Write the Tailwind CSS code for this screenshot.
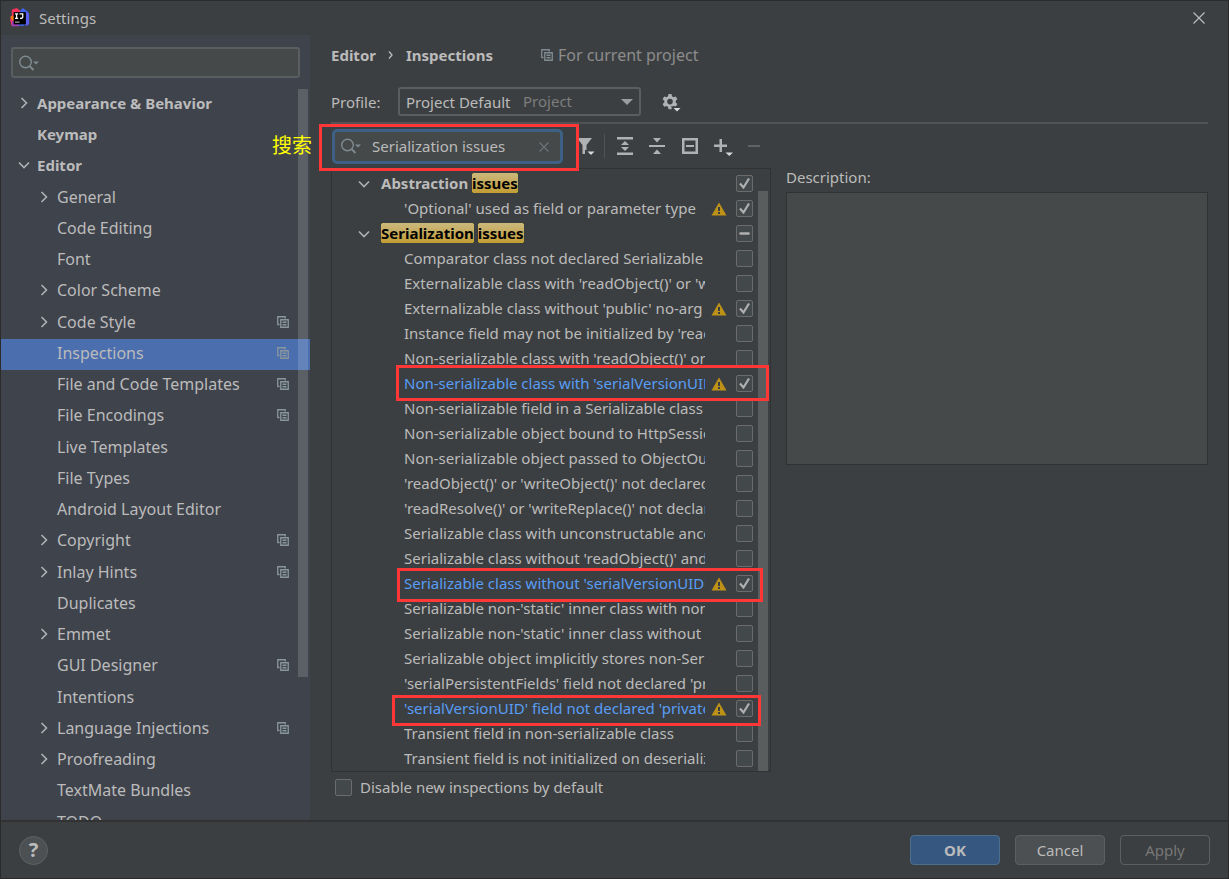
<!DOCTYPE html>
<html lang="en">
<head>
  <meta charset="UTF-8">
  <meta name="viewport" content="width=device-width, initial-scale=1.0">
  <title>Settings</title>
  <script src="https://cdn.jsdelivr.net/npm/@tailwindcss/browser@4"></script>
</head>
<body class="relative flex h-screen flex-col overflow-hidden border border-[#2b2b2b] bg-[#3c3f41] font-['Noto_Sans','Noto_Sans_CJK_SC',sans-serif] text-[15px] leading-5 text-[#bbbbbb]">

  <!-- Shared icons -->
  <svg class="hidden">
    <symbol id="i-right" viewBox="0 0 12 12"><path d="M3.500 1 8.500 6l-5 5" fill="none" stroke="#afb1b3" stroke-width="1.600"/></symbol>
    <symbol id="i-down" viewBox="0 0 12 12"><path d="M1 3.500 6 8.500l5-5" fill="none" stroke="#afb1b3" stroke-width="1.600"/></symbol>
    <symbol id="i-copy" viewBox="0 0 12 12"><path d="M2.500 8.500H.75V.75h7.500V2.500M3.750 3.750h7.500v7.500h-7.500zM5.500 6.250h4M5.500 8.750h4" fill="none" stroke="currentColor" stroke-width="1.300"/></symbol>
    <symbol id="i-search" viewBox="0 0 20 16"><circle cx="6.500" cy="7" r="5.800" fill="none" stroke="#7f8b91" stroke-width="1.400"/><path d="m10.500 11 4 4" stroke="#7f8b91" stroke-width="1.800"/><path d="M14 6.500h6l-3 3z" fill="#7f8b91"/></symbol>
    <symbol id="i-warn" viewBox="0 0 16 14"><path d="M8 .5 15.500 13.500H.5z" fill="#be9117"/><path d="M7 5h2v4H7zM7 10h2v2H7z" fill="#3c3f41"/></symbol>
    <symbol id="i-tick" viewBox="0 0 17 17"><path d="m4 8.500 3.500 4 5.500-9" fill="none" stroke="#b0b0b0" stroke-width="2.200"/></symbol>
    <symbol id="i-dash" viewBox="0 0 17 17"><path d="M4.500 8.500h8" stroke="#b0b0b0" stroke-width="2.500" stroke-linecap="round"/></symbol>
  </svg>

  <header class="flex h-[34px] shrink-0 items-center pr-[23px] pl-[9px]">
    <svg class="mr-[9px] size-5" viewBox="0 0 22 22">
      <path d="M2 2 7 0l6 4v7L2 20 0 13l2-4z" fill="#fe315d"/>
      <path d="M0 10 3 8l5 4-3 5z" fill="#f97a12"/>
      <path d="M2 14h12l-4 6H2z" fill="#a03fb8"/>
      <path d="m11 3 3-3 6 4v12l-6 4-5-1z" fill="#3f63ea"/>
      <path d="m17 3 4 3v12l-4 2z" fill="#5a5ff0"/>
      <path d="M4 4.500h13.500V18H4z" fill="#000"/>
      <path d="M5.500 6.500h3.500M7.250 6.500v5M5.500 11.500h3.500M10.500 6.500H14v3.500q0 1.500-3 1.500" fill="none" stroke="#fff" stroke-width="1.400"/>
      <path d="M5.500 15.500h5" stroke="#bbb" stroke-width="1.200"/>
    </svg>
    <h1 class="flex-1">Settings</h1>
    <button type="button" aria-label="Close">
      <svg class="size-3" viewBox="0 0 12 12"><path d="m.5.5 11 11m0-11-11 11" stroke="#bbbbbb" stroke-width="1.200"/></svg>
    </button>
  </header>

  <div class="flex min-h-0 flex-1">
    <!-- Settings categories -->
    <aside class="relative flex w-[309px] shrink-0 flex-col bg-[#3f434c] pt-3">
      <div class="relative mr-2.5 mb-[11px] ml-2.5">
        <svg class="absolute top-2 left-2 h-4 w-5"><use href="#i-search"/></svg>
        <input type="text" aria-label="Search settings" class="block h-[31px] w-full rounded-[3px] border-2 border-[#5a5e60] bg-[#45494a] pl-8 outline-none">
      </div>
      <nav class="min-h-0 flex-1 overflow-hidden" id="categories"></nav>
      <div class="absolute top-[54px] right-0.5 h-[588px] w-2.5 bg-white/15"></div>
    </aside>

    <main class="flex min-w-0 flex-1 flex-col pr-5 pl-[21px]">
      <div class="mt-2.5 flex h-5 items-center">
        <b>Editor</b>
        <svg class="mx-3 h-2 w-[6px]" viewBox="0 0 6 8"><path d="m1 .5 3 3.500-3 3.500" fill="none" stroke="#bbbbbb" stroke-width="1.300"/></svg>
        <b>Inspections</b>
        <svg class="mr-[5px] ml-12 size-3 text-[#7f8b91]"><use href="#i-copy"/></svg>
        <span class="text-base leading-5 text-[#8c8c8c]">For current project</span>
      </div>

      <div class="mt-[22px] flex h-[29px] items-center">
        <label for="profile" class="w-[67px]">Profile:</label>
        <div class="relative">
          <select id="profile" class="block h-[29px] w-[243px] appearance-none rounded-[3px] border-2 border-[#5a5e60] bg-[#3c3f41] pl-1.5 outline-none">
            <option>Project Default</option>
            <option>Default</option>
          </select>
          <span class="pointer-events-none absolute top-1 left-[125px] text-[#7d7d7d]">Project</span>
          <svg class="pointer-events-none absolute top-3 right-2 h-[6px] w-3" viewBox="0 0 12 6"><path d="M0 0h12L6 6z" fill="#9a9da0"/></svg>
        </div>
        <button type="button" aria-label="Profile actions" class="ml-5">
          <svg class="size-5" viewBox="0 0 20 20">
            <path d="M7.500 2h3l.5 2.300 1.500.9 2.300-.7 1.600 2.700-1.700 1.600v1.600l1.700 1.600-1.600 2.700-2.300-.7-1.500.9-.5 2.300h-3L7 14.900 5.500 14l-2.300.7L1.600 12l1.700-1.600V8.800L1.600 7.200l1.600-2.700 2.300.7L7 4.300zM9 6.800a2.800 2.800 0 1 0 0 5.600 2.800 2.800 0 0 0 0-5.600" fill="#afb1b3" fill-rule="evenodd"/>
            <path d="M12 15.500h8l-4 4z" fill="#3c3f41" stroke="#3c3f41" stroke-width="2"/>
            <path d="M12.500 16h7L16 19.500z" fill="#d8d8d8"/>
          </svg>
        </button>
      </div>
      <hr class="mt-1.5 border-t-2 border-[#515355]">

      <div class="flex min-h-0 gap-[15px]">
        <section class="w-[440px] shrink-0">
          <div class="flex h-11 items-center">
            <div class="relative">
              <svg class="absolute top-[9px] left-2.5 h-4 w-5"><use href="#i-search"/></svg>
              <input type="text" aria-label="Search inspections" value="Serialization issues" class="ml-px block h-[35px] w-[231px] rounded-[5px] border-3 border-[#3d6185] bg-[#45494a] pl-[37px] outline-none">
              <button type="button" aria-label="Clear" class="absolute top-[13px] right-3.5">
                <svg class="block size-2.5" viewBox="0 0 10 10"><path d="m.5.5 9 9m0-9-9 9" stroke="#6e7476" stroke-width="1.200"/></svg>
              </button>
            </div>
            <button type="button" aria-label="Filter" class="ml-3.5">
              <svg class="h-5 w-[18px]" viewBox="0 0 18 20"><path d="M0 2h15l-5.500 7v9h-4V9z" fill="#afb1b3"/><path d="M8 14h10v6H8z" fill="#3c3f41"/><path d="M10.500 15.500h7L14 19z" fill="#d8d8d8"/></svg>
            </button>
            <span class="mx-[9px] h-6 w-px bg-[#515355]"></span>
            <div class="ml-0.5 flex flex-1 items-center gap-[15px]">
              <button type="button" aria-label="Expand all">
                <svg class="block size-[18px]" viewBox="0 0 18 18"><path d="M1 0h16v2.500H1zM1 15.500h16V18H1zM5 8l4-4 4 4zM5 10h8l-4 4z" fill="#afb1b3"/></svg>
              </button>
              <button type="button" aria-label="Collapse all">
                <svg class="block h-[18px] w-4" viewBox="0 0 16 18"><path d="M0 8h16v2H0zM4 1h8L8 5.500zM4 17h8l-4-4.500z" fill="#afb1b3"/></svg>
              </button>
              <button type="button" aria-label="Reset to empty">
                <svg class="ml-0.5 block size-4" viewBox="0 0 16 16"><path d="M1.250 1.250h13.500v13.500H1.250z" fill="none" stroke="#afb1b3" stroke-width="2.500"/><path d="M4 7h8v2H4z" fill="#afb1b3"/></svg>
              </button>
              <button type="button" aria-label="Add">
                <svg class="block size-5" viewBox="0 0 20 20"><path d="M6.500 3H9v5.500h5V11H9v5H6.500v-5H1V8.500h5.500z" fill="#afb1b3"/><path d="M12.500 16.500H20L16.250 20z" fill="#d8d8d8"/></svg>
              </button>
              <button type="button" aria-label="Remove" disabled>
                <svg class="block h-4 w-3" viewBox="0 0 12 16"><path d="M0 7h12v2H0z" fill="#5f6264"/></svg>
              </button>
            </div>
          </div>

          <div class="relative h-[604px] overflow-hidden border border-[#323232] pt-0.5">
            <ul id="inspections"></ul>
            <div class="absolute top-[22px] right-0.5 bottom-0 w-2.5 bg-[#595d5d]"></div>
          </div>

          <div class="mt-[5px] flex items-center pl-1">
            <input type="checkbox" id="disableNew" class="size-[17px] appearance-none rounded-[2px] border border-[#6b6b6b] bg-[#43494a]">
            <label for="disableNew" class="pl-2">Disable new inspections by default</label>
          </div>
        </section>

        <section class="min-w-0 flex-1 pt-[43px]">
          <label for="description" class="block">Description:</label>
          <textarea id="description" readonly class="mt-[5px] block h-[273px] w-full resize-none border border-[#323232] bg-[#45494a] outline-none"></textarea>
        </section>
      </div>
    </main>
  </div>

  <footer class="flex h-[58px] shrink-0 items-center gap-[15px] border-t-2 border-[#323232] pr-[18px] pl-[18px]">
    <button type="button" aria-label="Help" class="mr-auto size-[29px] rounded-full border border-[#5e6263] bg-[#4c5052] text-xl leading-6 font-bold">?</button>
    <button type="button" class="h-[30px] w-[90px] rounded-[4px] border border-[#4c708c] bg-[#365880] font-bold">OK</button>
    <button type="button" class="h-[30px] w-[90px] rounded-[4px] border border-[#5e6060] bg-[#4c5052]">Cancel</button>
    <button type="button" disabled class="h-[30px] w-[90px] rounded-[4px] border border-[#5e6060] text-[#777777]">Apply</button>
  </footer>

  <!-- Callouts -->
  <p class="absolute top-[133px] left-[271px] text-xl leading-6 text-[#ffff00]">搜索</p>
  <div class="pointer-events-none absolute top-[123px] left-[318px] h-[47px] w-[260px] border-3 border-[#ff3737]"></div>
  <div class="pointer-events-none absolute top-[364px] left-[395px] h-9 w-[373px] border-3 border-[#ff3737]"></div>
  <div class="pointer-events-none absolute top-[567px] left-[396px] h-[34px] w-[366px] border-3 border-[#ff3737]"></div>
  <div class="pointer-events-none absolute top-[694px] left-[391px] h-[31px] w-[369px] border-3 border-[#ff3737]"></div>

  <script>
    // [label, arrow, project icon, top level]
    const categories = [
      ["Appearance &amp; Behavior", "right", false, true],
      ["Keymap", "", false, true],
      ["Editor", "down", false, true],
      ["General", "right"],
      ["Code Editing", ""],
      ["Font", ""],
      ["Color Scheme", "right"],
      ["Code Style", "right", true],
      ["Inspections", "", true],
      ["File and Code Templates", "", true],
      ["File Encodings", "", true],
      ["Live Templates", ""],
      ["File Types", ""],
      ["Android Layout Editor", ""],
      ["Copyright", "right", true],
      ["Inlay Hints", "right", true],
      ["Duplicates", ""],
      ["Emmet", "right"],
      ["GUI Designer", "", true],
      ["Intentions", ""],
      ["Language Injections", "right", true],
      ["Proofreading", "right"],
      ["TextMate Bundles", ""],
      ["TODO", ""],
    ];

    document.getElementById("categories").innerHTML = categories.map(([label, arrow, project, top]) => `
      <a href="#" class="flex h-[31px] items-center pr-[21px] pb-1 nth-[4n+3]:h-8 ${top ? "pl-[17px] font-bold" : "pl-[37px] text-base leading-5"} ${label === "Inspections" ? "bg-[#4b6eaf]" : ""}">
        <svg class="mr-[7px] size-3">${arrow ? `<use href="#i-${arrow}"/>` : ""}</svg>
        <span class="flex-1 whitespace-nowrap">${label}</span>
        ${project ? `<svg class="size-3 text-[#8a969d]"><use href="#i-copy"/></svg>` : ""}
      </a>`).join("");

    // state: "on", "mixed" or none; changed inspections are drawn blue
    const mark = (text) => `<mark class="rounded-[3px] bg-linear-to-b from-[#cbb87c] to-[#c29d32] text-black">${text}</mark>`;
    const inspections = [
      { group: true, text: `Abstraction ${mark("issues")}`, state: "on" },
      { text: "'Optional' used as field or parameter type", state: "on", warn: true },
      { group: true, text: `${mark("Serialization")} ${mark("issues")}`, state: "mixed" },
      { text: "Comparator class not declared Serializable" },
      { text: "Externalizable class with 'readObject()' or 'writeObject()'" },
      { text: "Externalizable class without 'public' no-arg constructor", state: "on", warn: true },
      { text: "Instance field may not be initialized by 'readObject()'" },
      { text: "Non-serializable class with 'readObject()' or 'writeObject()'" },
      { text: "Non-serializable class with 'serialVersionUID' field", state: "on", warn: true, changed: true },
      { text: "Non-serializable field in a Serializable class" },
      { text: "Non-serializable object bound to HttpSession" },
      { text: "Non-serializable object passed to ObjectOutputStream" },
      { text: "'readObject()' or 'writeObject()' not declared 'private'" },
      { text: "'readResolve()' or 'writeReplace()' not declared 'protected'" },
      { text: "Serializable class with unconstructable ancestor" },
      { text: "Serializable class without 'readObject()' and 'writeObject()'" },
      { text: "Serializable class without 'serialVersionUID'", state: "on", warn: true, changed: true },
      { text: "Serializable non-'static' inner class with non-Serializable outer class" },
      { text: "Serializable non-'static' inner class without 'serialVersionUID'" },
      { text: "Serializable object implicitly stores non-Serializable object" },
      { text: "'serialPersistentFields' field not declared 'private static final'" },
      { text: "'serialVersionUID' field not declared 'private static final long'", state: "on", warn: true, changed: true },
      { text: "Transient field in non-serializable class" },
      { text: "Transient field is not initialized on deserialization" },
    ];

    document.getElementById("inspections").innerHTML = inspections.map((item, i) => `
      <li class="flex h-[25px] items-center pr-[17px] ${item.group ? "pl-[26px] font-bold" : "pl-[72px]"}">
        ${item.group ? `<svg class="mr-[11px] size-3 shrink-0"><use href="#i-down"/></svg>` : ""}
        <label for="inspection${i}" class="min-w-0 flex-1 overflow-hidden pb-0.5 whitespace-nowrap ${item.changed ? "text-[#589df6]" : ""}">${item.text}</label>
        <svg class="mr-[9px] ml-1.5 h-3.5 w-4 shrink-0">${item.warn ? `<use href="#i-warn"/>` : ""}</svg>
        <span class="relative size-[17px] shrink-0">
          <input type="checkbox" id="inspection${i}" ${item.state === "on" ? "checked" : ""} class="block size-[17px] appearance-none rounded-[2px] border border-[#6b6b6b] bg-[#43494a]">
          <svg class="pointer-events-none absolute inset-0 size-[17px]">${item.state === "on" ? `<use href="#i-tick"/>` : item.state === "mixed" ? `<use href="#i-dash"/>` : ""}</svg>
        </span>
      </li>`).join("");
  </script>
</body>
</html>
